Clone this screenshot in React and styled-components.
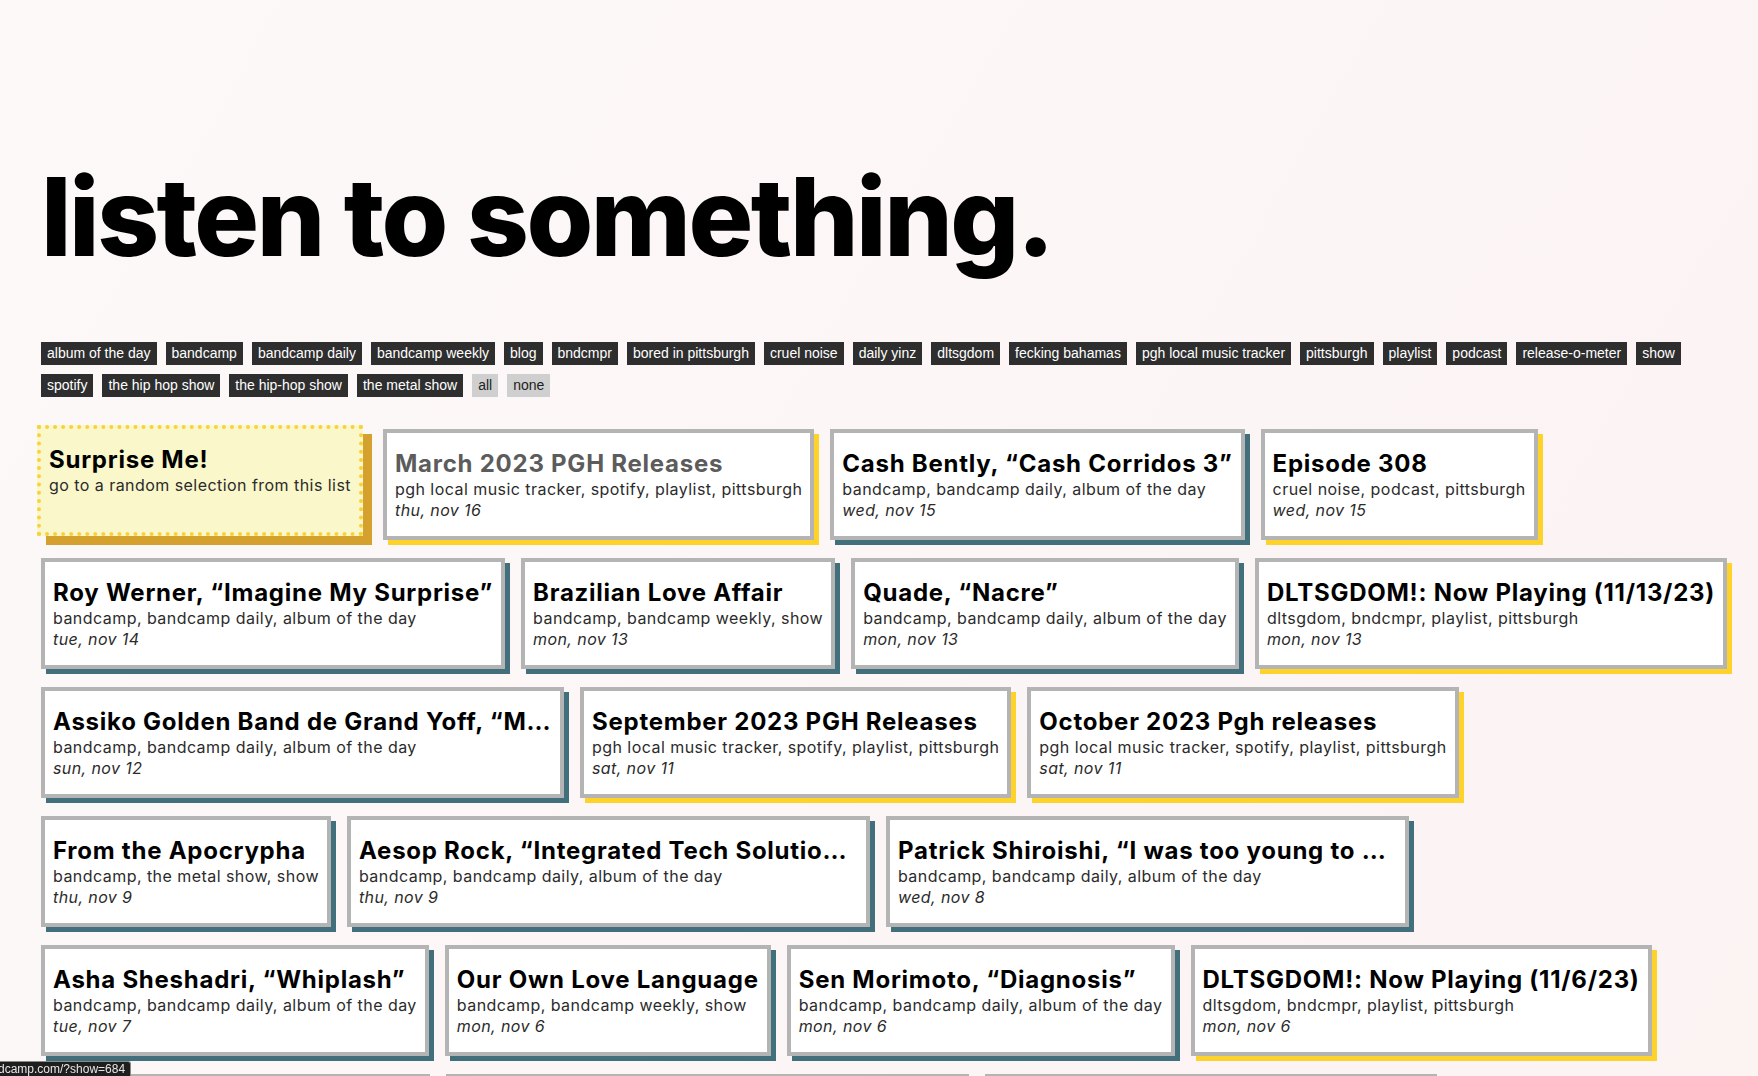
import React from 'react';
import styled, { createGlobalStyle } from 'styled-components';

const TEAL = '#426f7c';
const YELLOW = '#fdd32b';

const GlobalStyle = createGlobalStyle`
  html, body {
    margin: 0;
    padding: 0;
  }
  body {
    background: linear-gradient(120deg, #fdf9f9 0%, #fcf5f5 60%, #fcf3f3 100%);
    font-family: Inter, "Noto Sans", sans-serif;
    color: #111;
    min-height: 100vh;
  }
`;

const Page = styled.main`
  padding: 163px 26px 40px 41px;
`;

const Heading = styled.h1`
  margin: 0;
  font-family: Inter, "Noto Sans", sans-serif;
  font-weight: 800;
  font-size: 108px;
  line-height: 108px;
  letter-spacing: -2.5px;
  color: #000;
`;

const FilterList = styled.ul`
  display: flex;
  flex-wrap: wrap;
  gap: 9px 9px;
  max-width: 1690px;
  margin: 71px 0 0;
  padding: 0;
  list-style: none;
`;

const FilterChip = styled.li`
  font-family: "Liberation Sans", Arial, sans-serif;
  font-size: 14px;
  line-height: 17px;
  padding: 3px 6px;
  background: ${p => (p.$muted ? '#cfcfcf' : '#2e2e2e')};
  color: ${p => (p.$muted ? '#222' : '#fff')};
  white-space: nowrap;
`;

const Shelves = styled.section`
  display: flex;
  flex-direction: column;
  gap: 18px;
  margin-top: 32px;
`;

const Shelf = styled.div`
  display: flex;
  gap: 16px;
`;

const Card = styled.a`
  display: block;
  flex: 0 0 auto;
  box-sizing: border-box;
  max-width: 523px;
  min-width: 0;
  padding: 16px 8px 15px;
  background: #fff;
  border: 4px solid #b4b4b4;
  box-shadow: 5px 5px 0 ${p => p.$accent};
  color: #2b2b2b;
  text-decoration: none;
`;

const SurpriseCard = styled(Card)`
  background: #faf7ca;
  border: 4px dotted #f8d23a;
  box-shadow: 9px 9px 0 #d4a02e;
  transform: translate(-4px, -4px);
`;

const CardTitle = styled.div`
  font-weight: 700;
  font-size: 24px;
  line-height: 30px;
  letter-spacing: 0.75px;
  color: ${p => (p.$visited ? '#5c5c5c' : '#000')};
  white-space: nowrap;
  overflow: hidden;
  text-overflow: ellipsis;
`;

const CardTags = styled.div`
  font-size: 16px;
  line-height: 21px;
  letter-spacing: 0.45px;
  white-space: nowrap;
  overflow: hidden;
  text-overflow: ellipsis;
`;

const CardDate = styled.div`
  font-size: 16px;
  line-height: 21px;
  letter-spacing: 0.4px;
  font-style: italic;
  white-space: nowrap;
`;

const StatusBar = styled.div`
  position: fixed;
  left: 0;
  bottom: 0;
  height: 14px;
  padding: 0 5px 0 0;
  background: #1e1e1e;
  border: 1px solid #8a8a8a;
  border-left: none;
  border-bottom: none;
  border-top-right-radius: 3px;
  font-family: "Liberation Sans", Arial, sans-serif;
  font-size: 12px;
  line-height: 14px;
  color: #e6e6e6;
  white-space: nowrap;
  overflow: hidden;
  text-indent: -2px;
`;

const filters = [
  'album of the day', 'bandcamp', 'bandcamp daily', 'bandcamp weekly', 'blog', 'bndcmpr',
  'bored in pittsburgh', 'cruel noise', 'daily yinz', 'dltsgdom', 'fecking bahamas',
  'pgh local music tracker', 'pittsburgh', 'playlist', 'podcast', 'release-o-meter', 'show',
  'spotify', 'the hip hop show', 'the hip-hop show', 'the metal show'
];

const BC_DAILY = 'bandcamp, bandcamp daily, album of the day';
const BC_WEEKLY = 'bandcamp, bandcamp weekly, show';
const PGH_TRACKER = 'pgh local music tracker, spotify, playlist, pittsburgh';
const DLTSGDOM = 'dltsgdom, bndcmpr, playlist, pittsburgh';

const shelves = [
  [
    { surprise: true },
    { title: 'March 2023 PGH Releases', tags: PGH_TRACKER, date: 'thu, nov 16', accent: YELLOW, visited: true },
    { title: 'Cash Bently, “Cash Corridos 3”', tags: BC_DAILY, date: 'wed, nov 15', accent: TEAL },
    { title: 'Episode 308', tags: 'cruel noise, podcast, pittsburgh', date: 'wed, nov 15', accent: YELLOW }
  ],
  [
    { title: 'Roy Werner, “Imagine My Surprise”', tags: BC_DAILY, date: 'tue, nov 14', accent: TEAL },
    { title: 'Brazilian Love Affair', tags: BC_WEEKLY, date: 'mon, nov 13', accent: TEAL },
    { title: 'Quade, “Nacre”', tags: BC_DAILY, date: 'mon, nov 13', accent: TEAL },
    { title: 'DLTSGDOM!: Now Playing (11/13/23)', tags: DLTSGDOM, date: 'mon, nov 13', accent: YELLOW }
  ],
  [
    { title: 'Assiko Golden Band de Grand Yoff, “Mbalax Assiko”', tags: BC_DAILY, date: 'sun, nov 12', accent: TEAL },
    { title: 'September 2023 PGH Releases', tags: PGH_TRACKER, date: 'sat, nov 11', accent: YELLOW },
    { title: 'October 2023 Pgh releases', tags: PGH_TRACKER, date: 'sat, nov 11', accent: YELLOW }
  ],
  [
    { title: 'From the Apocrypha', tags: 'bandcamp, the metal show, show', date: 'thu, nov 9', accent: TEAL },
    { title: 'Aesop Rock, “Integrated Tech Solutions”', tags: BC_DAILY, date: 'thu, nov 9', accent: TEAL },
    { title: 'Patrick Shiroishi, “I was too young to be weightless”', tags: BC_DAILY, date: 'wed, nov 8', accent: TEAL }
  ],
  [
    { title: 'Asha Sheshadri, “Whiplash”', tags: BC_DAILY, date: 'tue, nov 7', accent: TEAL },
    { title: 'Our Own Love Language', tags: BC_WEEKLY, date: 'mon, nov 6', accent: TEAL },
    { title: 'Sen Morimoto, “Diagnosis”', tags: BC_DAILY, date: 'mon, nov 6', accent: TEAL },
    { title: 'DLTSGDOM!: Now Playing (11/6/23)', tags: DLTSGDOM, date: 'mon, nov 6', accent: YELLOW }
  ],
  [
    { title: 'Maria Chiara Argirò, “Closer”', tags: BC_DAILY, date: 'fri, nov 3', accent: TEAL },
    { title: 'Jaimie Branch, “Fly or Die Fly or Die Fly or Die”', tags: BC_DAILY, date: 'thu, nov 2', accent: TEAL },
    { title: 'Goodbye October, Hello November', tags: BC_WEEKLY, date: 'wed, nov 1', accent: TEAL }
  ]
];

function Entry({ item }) {
  if (item.surprise) {
    return (
      <SurpriseCard href="#" $accent="#d4a02e">
        <CardTitle>Surprise Me!</CardTitle>
        <CardTags>go to a random selection from this list</CardTags>
      </SurpriseCard>
    );
  }
  return (
    <Card href="#" $accent={item.accent}>
      <CardTitle $visited={item.visited}>{item.title}</CardTitle>
      <CardTags>{item.tags}</CardTags>
      <CardDate>{item.date}</CardDate>
    </Card>
  );
}

export default function App() {
  return (
    <>
      <GlobalStyle />
      <Page>
        <Heading>listen to something.</Heading>
        <FilterList>
          {filters.map(f => <FilterChip key={f}>{f}</FilterChip>)}
          <FilterChip $muted>all</FilterChip>
          <FilterChip $muted>none</FilterChip>
        </FilterList>
        <Shelves>
          {shelves.map((row, i) => (
            <Shelf key={i}>
              {row.map((item, j) => <Entry key={j} item={item} />)}
            </Shelf>
          ))}
        </Shelves>
      </Page>
      <StatusBar>dcamp.com/?show=684</StatusBar>
    </>
  );
}
